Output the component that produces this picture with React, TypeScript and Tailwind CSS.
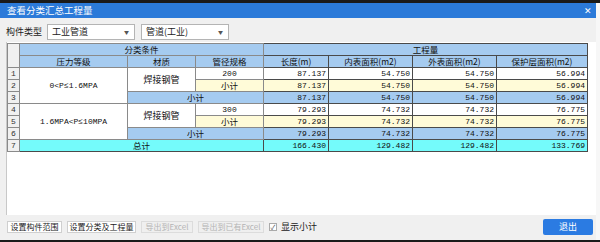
import React from "react";

const cjk = { fontFamily: '"Noto Sans CJK SC", "Liberation Sans", sans-serif' };
const num = { fontFamily: '"Liberation Mono", "Noto Sans CJK SC", monospace' };

type Row = { len: string; inner: string; outer: string; prot: string };

const vals: Record<string, Row> = {
  a: { len: "87.137", inner: "54.750", outer: "54.750", prot: "56.994" },
  b: { len: "79.293", inner: "74.732", outer: "74.732", prot: "76.775" },
  t: { len: "166.430", inner: "129.482", outer: "129.482", prot: "133.769" },
};

const td = "border border-[#8a8a8a] p-0 leading-none";
const numTd = "border border-[#4a4a4a] pr-[2px] text-right leading-none text-[8px]";

const NumCells = ({ r, bg }: { r: Row; bg: string }) => (
  <>
    {[r.len, r.inner, r.outer, r.prot].map((v, i) => (
      <td key={i} className={`${numTd} ${bg}`} style={num}>
        {v}
      </td>
    ))}
  </>
);

const RowNo = ({ n }: { n: number }) => (
  <td className={`${td} bg-[#f0f0f0] pl-[3px] text-left text-[8px] text-[#333]`} style={num}>
    {n}
  </td>
);

const Select = ({ label }: { label: string }) => (
  <div className="flex h-[16px] w-[88px] items-center justify-between border border-[#b4b4b4] bg-white pl-[4px] pr-[5px]">
    <span className="text-[9px] text-[#222]">{label}</span>
    <span className="text-[5px] text-[#555]">▼</span>
  </div>
);

const Btn = ({ label, disabled, w }: { label: string; disabled?: boolean; w: string }) => (
  <div
    className={`flex h-[12px] ${w} items-center justify-center whitespace-nowrap border text-[8px] ${
      disabled ? "border-[#dcdcdc] bg-[#efefef] text-[#b4b4b4]" : "border-[#cfcfcf] bg-white text-[#222]"
    }`}
  >
    {label}
  </div>
);

export default function App() {
  return (
    <div className="flex h-[242px] w-[600px] flex-col bg-[#1a1a1a] pt-[3px] pb-[2px]" style={cjk}>
      <div className="flex flex-1 flex-col border-r-[4px] border-[#f7f7f7] bg-[#f0f0f0]">
        <div className="flex h-[15px] items-center justify-between bg-[#2b7ad9] pl-[7px] pr-[4px] text-white">
          <span className="text-[9.5px]">查看分类汇总工程量</span>
          <span className="text-[9px] leading-none">✕</span>
        </div>
        <div className="mt-[6px] flex items-center gap-[6px] pl-[6px]">
          <span className="mr-[-1px] text-[9px] text-[#222]">构件类型</span>
          <Select label="工业管道" />
          <Select label="管道(工业)" />
        </div>
        <div className="ml-[6px] mt-[2px] h-[173px] border-l border-[#c8c8c8] bg-white pt-[1px]">
          <table className="border-collapse text-[8.5px] text-[#111]">
            <colgroup>
              <col className="w-[12px]" />
              <col className="w-[108px]" />
              <col className="w-[68px]" />
              <col className="w-[68px]" />
              <col className="w-[65px]" />
              <col className="w-[84px]" />
              <col className="w-[84px]" />
              <col className="w-[91px]" />
            </colgroup>
            <tbody>
              <tr className="h-[12px]">
                <td rowSpan={2} className={`${td} bg-[#f0f0f0]`} />
                <td colSpan={3} className={`${td} bg-[#a5cbf0] text-center`}>
                  分类条件
                </td>
                <td colSpan={4} className="border border-[#4a4a4a] bg-[#a5cbf0] text-center leading-none">
                  工程量
                </td>
              </tr>
              <tr className="h-[12px] bg-[#a5cbf0] text-center">
                <td className={td}>压力等级</td>
                <td className={td}>材质</td>
                <td className={td}>管径规格</td>
                <td className="border border-[#4a4a4a] leading-none">长度(m)</td>
                <td className="border border-[#4a4a4a] leading-none">内表面积(m2)</td>
                <td className="border border-[#4a4a4a] leading-none">外表面积(m2)</td>
                <td className="border border-[#4a4a4a] leading-none">保护层面积(m2)</td>
              </tr>
              <tr className="h-[12px]">
                <RowNo n={1} />
                <td rowSpan={3} className={`${td} bg-white text-center text-[8px]`} style={num}>
                  0&lt;P≤1.6MPA
                </td>
                <td rowSpan={2} className={`${td} bg-white text-center text-[9px]`}>
                  焊接钢管
                </td>
                <td className={`${td} bg-white text-center text-[8px]`} style={num}>
                  200
                </td>
                <NumCells r={vals.a} bg="bg-white" />
              </tr>
              <tr className="h-[12px]">
                <RowNo n={2} />
                <td className={`${td} bg-[#fffbd8] text-center`}>小计</td>
                <NumCells r={vals.a} bg="bg-[#fffbd8]" />
              </tr>
              <tr className="h-[12px]">
                <RowNo n={3} />
                <td colSpan={2} className={`${td} bg-[#a5cbf0] text-center`}>
                  小计
                </td>
                <NumCells r={vals.a} bg="bg-[#a5cbf0]" />
              </tr>
              <tr className="h-[12px]">
                <RowNo n={4} />
                <td rowSpan={3} className={`${td} bg-white text-center text-[8px]`} style={num}>
                  1.6MPA&lt;P≤10MPA
                </td>
                <td rowSpan={2} className={`${td} bg-white text-center text-[9px]`}>
                  焊接钢管
                </td>
                <td className={`${td} bg-white text-center text-[8px]`} style={num}>
                  300
                </td>
                <NumCells r={vals.b} bg="bg-white" />
              </tr>
              <tr className="h-[12px]">
                <RowNo n={5} />
                <td className={`${td} bg-[#fffbd8] text-center`}>小计</td>
                <NumCells r={vals.b} bg="bg-[#fffbd8]" />
              </tr>
              <tr className="h-[12px]">
                <RowNo n={6} />
                <td colSpan={2} className={`${td} bg-[#a5cbf0] text-center`}>
                  小计
                </td>
                <NumCells r={vals.b} bg="bg-[#a5cbf0]" />
              </tr>
              <tr className="h-[12px]">
                <RowNo n={7} />
                <td colSpan={3} className="border border-[#4a4a4a] bg-[#74fbfb] text-center leading-none">
                  总计
                </td>
                <NumCells r={vals.t} bg="bg-[#74fbfb]" />
              </tr>
            </tbody>
          </table>
        </div>
        <div className="flex items-center pl-[7px] pr-[3px] pt-[4px]">
          <div className="flex items-center gap-[5px]">
            <Btn label="设置构件范围" w="w-[55px]" />
            <Btn label="设置分类及工程量" w="w-[69px]" />
            <Btn label="导出到Excel" w="w-[52px]" disabled />
            <Btn label="导出到已有Excel" w="w-[66px]" disabled />
            <div className="flex items-center gap-[4px] whitespace-nowrap text-[9px] text-[#222]">
              <span className="flex h-[8px] w-[8px] items-center justify-center border border-[#aaa] bg-white text-[7px] leading-none text-[#555]">
                ✓
              </span>
              显示小计
            </div>
          </div>
          <div className="ml-auto flex h-[16px] w-[50px] items-center justify-center rounded-[2px] bg-[#2b7be2] text-[9px] text-white">
            退出
          </div>
        </div>
      </div>
    </div>
  );
}
